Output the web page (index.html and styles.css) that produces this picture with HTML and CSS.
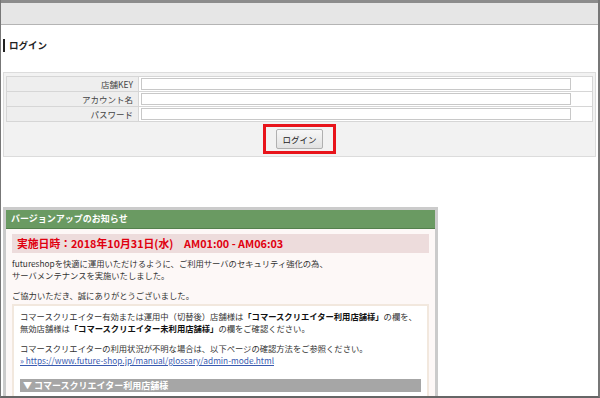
FILE: index.html
```html
<!DOCTYPE html>
<html lang="ja">

<head>
    <meta charset="UTF-8" />
    <title>ログイン</title>
    <link rel="stylesheet" href="styles.css">
</head>

<body>
    <div class="frame">
        <div class="topbar"></div>

        <h1 class="page_title">ログイン</h1>

        <div class="login_panel">
            <table class="login_table">
                <tr>
                    <th>店舗KEY</th>
                    <td><input type="text" class="field"></td>
                    <td class="spacer"></td>
                </tr>
                <tr>
                    <th>アカウント名</th>
                    <td><input type="text" class="field"></td>
                    <td class="spacer"></td>
                </tr>
                <tr>
                    <th>パスワード</th>
                    <td><input type="password" class="field"></td>
                    <td class="spacer"></td>
                </tr>
            </table>
            <div class="submit_row">
                <div class="highlight">
                    <button class="login_btn">ログイン</button>
                </div>
            </div>
        </div>

        <div class="notice">
            <div class="notice_head">バージョンアップのお知らせ</div>
            <div class="notice_body">
                <div class="notice_date">実施日時：2018年10月31日(水)　AM01:00 - AM06:03</div>
                <p class="notice_text">futureshopを快適に運用いただけるように、ご利用サーバのセキュリティ強化の為、<br>サーバメンテナンスを実施いたしました。</p>
                <p class="notice_text">ご協力いただき、誠にありがとうございました。</p>

                <div class="notice_box">
                    <p class="notice_text">コマースクリエイター有効または運用中（切替後）店舗様は<b>「コマースクリエイター利用店舗様」</b>の欄を、<br>無効店舗様は<b>「コマースクリエイター未利用店舗様」</b>の欄をご確認ください。</p>
                    <p class="notice_text">コマースクリエイターの利用状況が不明な場合は、以下ページの確認方法をご参照ください。<br><a href="#">» https://www.future-shop.jp/manual/glossary/admin-mode.html</a></p>
                    <div class="sub_head">▼ コマースクリエイター利用店舗様</div>
                </div>
            </div>
        </div>
    </div>
</body>

</html>
```

FILE: styles.css
```css
* {
    box-sizing: border-box;
}

body {
    margin: 0;
    padding: 0;
    background-color: #fff;
    font-family: "Noto Sans CJK JP", "DejaVu Sans", sans-serif;
    color: #333;
}

.frame {
    width: 600px;
    height: 398px;
    overflow: hidden;
    border-left: 1px solid #777;
    border-right: 2px solid #777;
    border-bottom: 2px solid #666;
    background-color: #fff;
}

.topbar {
    height: 25px;
    background-color: #e6e6e6;
    border-top: 3px solid #8c8c8c;
    border-bottom: 1px solid #b4b4b4;
}

.page_title {
    margin: 14px 0 0 2px;
    padding-left: 4px;
    border-left: 2px solid #222;
    font-size: 9.5px;
    line-height: 13px;
    font-weight: bold;
    color: #222;
}

/* login form */

.login_panel {
    margin: 20px 2px 0 2px;
    background-color: #f2f2f2;
    border: 1px solid #dcdcdc;
    padding: 3px 2px 2px 2px;
}

.login_table {
    width: 100%;
    border-collapse: collapse;
    border: 1px solid #d6d6d6;
    background-color: #fff;
}

.login_table th {
    width: 132px;
    height: 15px;
    padding: 0 5px 0 0;
    text-align: right;
    font-size: 8.5px;
    font-weight: normal;
    color: #444;
    background-color: #eeeeee;
    border: 1px solid #d6d6d6;
}

.login_table td {
    padding: 1px 0 1px 2px;
    border-top: 1px solid #d6d6d6;
    border-bottom: 1px solid #d6d6d6;
}

.login_table .spacer {
    width: 22px;
}

.field {
    display: block;
    width: 100%;
    height: 12px;
    margin: 0;
    border: 1px solid #c8c8c8;
    background-color: #fff;
    outline: 0;
}

.submit_row {
    display: flex;
    justify-content: center;
    padding: 2px 0 0 0;
}

.highlight {
    padding: 2px 10px 2px 10px;
    border: 3px solid #e8141b;
}

.login_btn {
    display: block;
    width: 47px;
    height: 20px;
    padding: 0;
    font-family: inherit;
    font-size: 8.5px;
    color: #222;
    background: linear-gradient(#f7f7f7, #e2e2e2);
    border: 1px solid #b0b0b0;
    border-radius: 2px;
}

/* notice */

.notice {
    width: 435px;
    margin: 50px 0 0 2px;
    border: 3px solid #cbcbcb;
    border-bottom: 0;
}

.notice_head {
    height: 19px;
    padding-left: 5px;
    background-color: #6a9a62;
    border-bottom: 1px solid #54804d;
    color: #fff;
    font-size: 9px;
    font-weight: bold;
    line-height: 18px;
}

.notice_body {
    padding: 5px 6px 10px 6px;
    background-color: #fdf8f7;
}

.notice_date {
    height: 19px;
    padding-left: 5px;
    background-color: #eddcdc;
    color: #e0000f;
    font-size: 10.8px;
    font-weight: bold;
    line-height: 19px;
}

.notice_text {
    margin: 4px 0 0 0;
    font-size: 8.3px;
    line-height: 12px;
    color: #333;
}

.notice_text + .notice_text {
    margin-top: 8px;
}

.notice_text b {
    color: #111;
}

.notice_text a {
    color: #3a5bb0;
}

.notice_box {
    margin-top: 3px;
    padding: 0 6px 10px 6px;
    background-color: #fff;
    border: 2px solid #f2e8de;
}

.sub_head {
    margin-top: 13px;
    height: 13px;
    padding-left: 3px;
    background-color: #a6a6a6;
    color: #fff;
    font-size: 9px;
    font-weight: bold;
    line-height: 13px;
}
```
